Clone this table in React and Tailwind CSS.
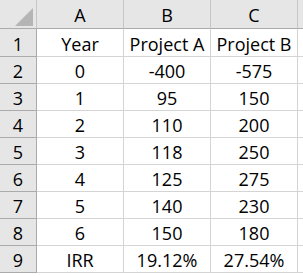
const cols = ['A', 'B', 'C'];

const rows = [
  ['Year', 'Project A', 'Project B'],
  ['0', '-400', '-575'],
  ['1', '95', '150'],
  ['2', '110', '200'],
  ['3', '118', '250'],
  ['4', '125', '275'],
  ['5', '140', '230'],
  ['6', '150', '180'],
  ['IRR', '19.12%', '27.54%'],
];

export default function App() {
  return (
    <div
      className="w-[303px] h-[276px] overflow-hidden bg-white text-black text-[18px] leading-none"
      style={{ fontFamily: '"Open Sans", "Liberation Sans", sans-serif' }}
    >
      <div className="grid grid-cols-[37px_87px_87px_87px_6px] grid-rows-[29px_28px_repeat(8,27px)]">
        {/* Corner */}
        <div className="relative bg-[#e6e6e6] border-r border-b border-r-[#c6c6c6] border-b-[#ababab]">
          <svg className="absolute left-[15px] top-[8px]" width="18" height="18" viewBox="0 0 18 18">
            <polygon points="18,0 18,18 0,18" fill="#b5b5b5" />
          </svg>
        </div>
        {cols.map((c) => (
          <div
            key={c}
            className="flex items-center justify-center bg-[#e6e6e6] border-r border-b border-r-[#c6c6c6] border-b-[#ababab] pt-[2px]"
          >
            {c}
          </div>
        ))}
        <div className="bg-[#e6e6e6] border-b border-b-[#ababab]" />

        {rows.map((r, i) => (
          <div key={i} className="contents">
            <div className="flex items-center justify-center bg-[#e6e6e6] border-r border-b border-r-[#ababab] border-b-[#ababab] pt-[2px]">
              {i + 1}
            </div>
            {r.map((v, j) => (
              <div
                key={j}
                className="flex items-center justify-center border-r border-b border-[#d4d4d4] pt-[2px]"
              >
                {v}
              </div>
            ))}
            <div className="border-b border-[#d4d4d4]" />
          </div>
        ))}
      </div>
    </div>
  );
}
